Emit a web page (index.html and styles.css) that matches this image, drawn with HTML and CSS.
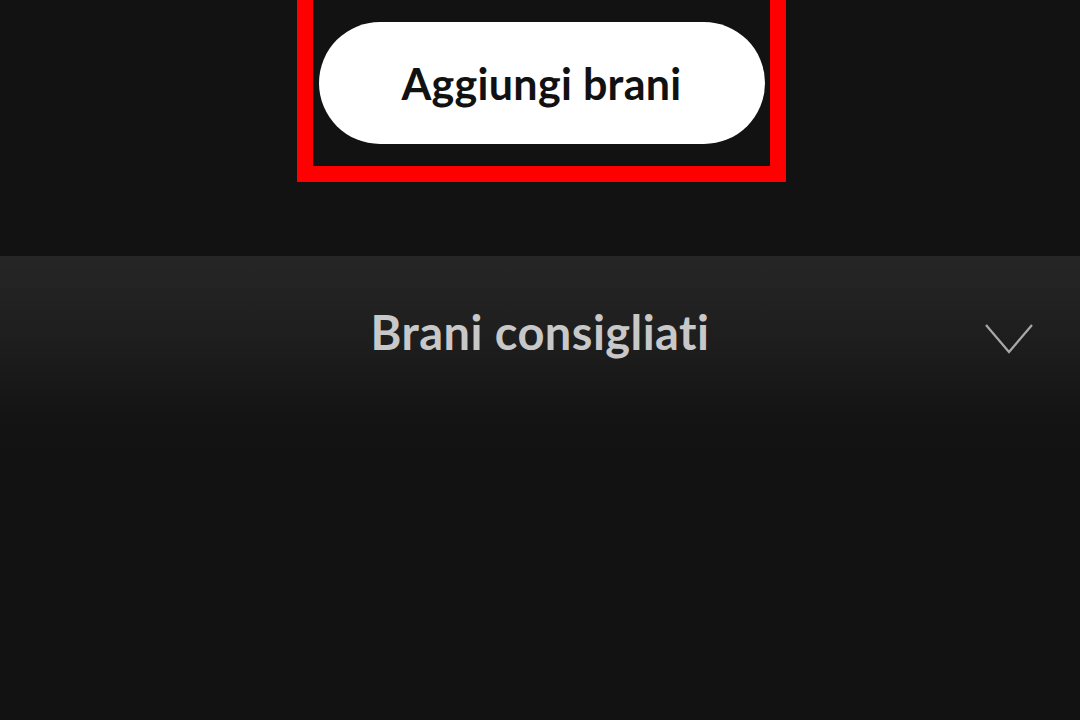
FILE: index.html
```html
<!DOCTYPE html>
<html lang="it">
<head>
<meta charset="utf-8">
<link rel="stylesheet" href="styles.css">
</head>
<body>
<div class="page">
  <div class="top">
    <div class="highlight">
      <button class="add-btn">Aggiungi brani</button>
    </div>
  </div>
  <section class="recommended">
    <div class="rec-header">
      <h2 class="rec-title">Brani consigliati</h2>
      <svg class="chevron" width="48" height="30" viewBox="0 0 48 30" aria-hidden="true">
        <polyline points="1,1 24,28 47,1" fill="none" stroke="#a8a8a8" stroke-width="2.2"/>
      </svg>
    </div>
  </section>
</div>
</body>
</html>
```
FILE: styles.css
```css
html, body {
  margin: 0;
  padding: 0;
  background: #121212;
}
.page {
  width: 1080px;
  height: 720px;
  overflow: hidden;
  background: #121212;
  font-family: "Lato", "Noto Sans", sans-serif;
}
.top {
  height: 256px;
  display: flex;
  justify-content: center;
  padding-left: 3px;
  box-sizing: border-box;
}
.highlight {
  margin-top: -10px;
  width: 457px;
  height: 144px;
  border: 16px solid #ff0000;
  border-top-width: 4px;
  display: flex;
  justify-content: center;
  align-items: flex-start;
  padding-top: 28px;
  box-sizing: content-box;
}
.add-btn {
  width: 446px;
  height: 122px;
  border: none;
  border-radius: 61px;
  background: #ffffff;
  color: #111111;
  font-family: "Lato", "Noto Sans", sans-serif;
  font-weight: 700;
  font-size: 43px;
  letter-spacing: 0.3px;
  padding: 0;
}
.recommended {
  height: 464px;
  background: linear-gradient(to bottom, #262626 0px, #1d1d1d 90px, #141414 160px, #121212 200px);
}
.rec-header {
  position: relative;
  display: flex;
  justify-content: center;
  align-items: center;
  height: 152px;
}
.rec-title {
  margin: 0;
  color: #c8c8c8;
  font-family: "Lato", "Noto Sans", sans-serif;
  font-weight: 700;
  font-size: 47px;
  letter-spacing: 0.45px;
}
.chevron {
  position: absolute;
  right: 47px;
  top: 68px;
}
```
